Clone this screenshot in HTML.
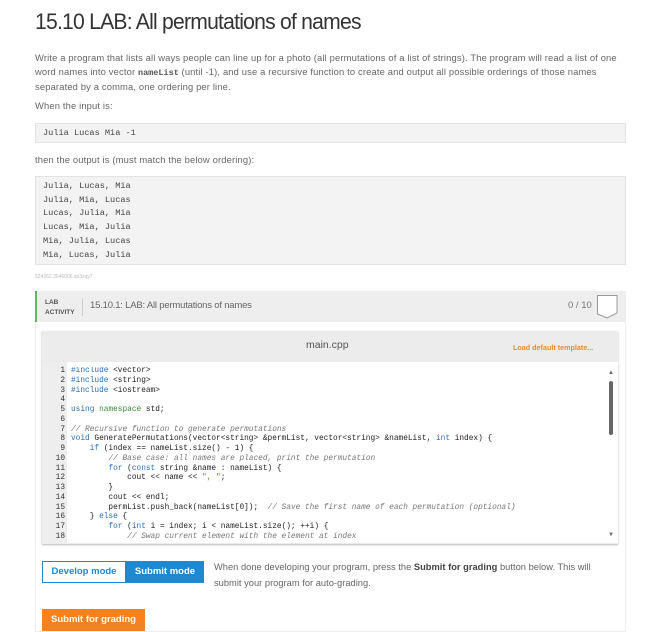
<!DOCTYPE html>
<html><head><style>
body{margin:0;width:661px;height:632px;overflow:hidden;background:#fff;font-family:"Liberation Sans",sans-serif;color:#555;position:relative}
.a{position:absolute}
h1{position:absolute;left:35px;top:9px;margin:0;font-weight:normal;font-size:22px;color:#333;letter-spacing:-0.8px;transform:scaleX(0.96);transform-origin:left}
.p{font-size:9.4px;line-height:14px;color:#666;letter-spacing:0.15px}
.box{background:#f3f3f3;border:1px solid #e3e3e3;font-family:"Liberation Mono",monospace;font-size:8.6px;color:#444;line-height:13.7px;padding:0 7px;box-sizing:border-box}
pre{margin:0;font-family:"Liberation Mono",monospace}
.code{font-size:7.8px;line-height:9.76px;color:#222}
.k{color:#2a6fb0}.g{color:#3a8a3a}.c{color:#777;font-style:italic}.o{color:#b07020}
</style></head><body>
<h1>15.10 LAB: All permutations of names</h1>
<div class="a p" style="left:35px;top:51px;width:592px">Write a program that lists all ways people can line up for a photo (all permutations of a list of strings). The program will read a list of one word names into vector <b style="font-family:'Liberation Mono',monospace;font-size:8.5px;color:#555;letter-spacing:0">nameList</b> (until -1), and use a recursive function to create and output all possible orderings of those names separated by a comma, one ordering per line.</div>
<div class="a p" style="left:35px;top:99px">When the input is:</div>
<div class="a box" style="left:35px;top:123px;width:591px;height:20px;line-height:19px">Julia Lucas Mia -1</div>
<div class="a p" style="left:35px;top:153px">then the output is (must match the below ordering):</div>
<div class="a box" style="left:35px;top:176px;width:591px;height:89px;padding-top:3px"><pre>Julia, Lucas, Mia
Julia, Mia, Lucas
Lucas, Julia, Mia
Lucas, Mia, Julia
Mia, Julia, Lucas
Mia, Lucas, Julia</pre></div>
<div class="a" style="left:35px;top:274px;font-size:5px;color:#bbb">524262.3646606.qx3zqy7</div>

<div class="a" style="left:35px;top:291px;width:591px;height:341px;border:1px solid #eee;border-top:none;box-sizing:border-box"></div>
<div class="a" style="left:35px;top:291px;width:589px;height:31px;background:#eee;border-left:2px solid #5cb85c"></div>
<div class="a" style="left:45px;top:298px;font-size:6.5px;font-weight:bold;color:#555;line-height:10px">LAB<br>ACTIVITY</div>
<div class="a" style="left:82px;top:298px;width:1px;height:18px;background:#ccc"></div>
<div class="a" style="left:90px;top:300px;font-size:9.5px;color:#666;letter-spacing:-0.2px">15.10.1: LAB: All permutations of names</div>
<div class="a" style="left:568px;top:300px;font-size:9.5px;color:#777">0 / 10</div>
<svg class="a" style="left:597px;top:295px" width="21" height="25"><path d="M0.5 0.5H20V18L10 23L0.5 19Z" fill="#fff" stroke="#999"/></svg>

<div class="a" style="left:42px;top:331px;width:576px;height:213px;background:#ececec;box-shadow:0 1px 2px #bbb"></div>
<div class="a" style="left:306px;top:339px;font-size:10.5px;color:#555">main.cpp</div>
<div class="a" style="left:513px;top:343px;font-size:7.2px;font-weight:bold;color:#f08a24">Load default template...</div>
<div class="a" style="left:42px;top:362px;width:576px;height:181px;background:#fff"></div>
<div class="a" style="left:42px;top:362px;width:25px;height:181px;background:#eee"></div>
<pre class="a code" style="left:42px;top:367px;width:23px;text-align:right;color:#333">1
2
3
4
5
6
7
8
9
10
11
12
13
14
15
16
17
18</pre>
<pre class="a code" style="left:71px;top:367px;height:176px;overflow:hidden"><span class="k">#include</span> &lt;vector&gt;
<span class="k">#include</span> &lt;string&gt;
<span class="k">#include</span> &lt;iostream&gt;

<span class="k">using</span> <span class="g">namespace</span> std;

<span class="c">// Recursive function to generate permutations</span>
<span class="k">void</span> GeneratePermutations(vector&lt;string&gt; &amp;permList, vector&lt;string&gt; &amp;nameList, <span class="k">int</span> index) {
    <span class="k">if</span> (index == nameList.size() - 1) {
        <span class="c">// Base case: all names are placed, print the permutation</span>
        <span class="k">for</span> (<span class="k">const</span> string &amp;name : nameList) {
            cout &lt;&lt; name &lt;&lt; <span class="o">", "</span>;
        }
        cout &lt;&lt; endl;
        permList.push_back(nameList[0]);  <span class="c">// Save the first name of each permutation (optional)</span>
    } <span class="k">else</span> {
        <span class="k">for</span> (<span class="k">int</span> i = index; i &lt; nameList.size(); ++i) {
            <span class="c">// Swap current element with the element at index</span>
            swap(nameList[i], nameList[index]);</pre>
<div class="a" style="left:609px;top:381px;width:4px;height:54px;background:#666;border-radius:2px"></div>
<div class="a" style="left:608px;top:370px;font-size:6px;color:#666">▲</div>
<div class="a" style="left:608px;top:532px;font-size:6px;color:#666">▼</div>

<div class="a" style="left:42px;top:561px;width:84px;height:22px;border:1px solid #1e88d0;box-sizing:border-box;font-size:9.5px;font-weight:bold;color:#1e88d0;text-align:center;line-height:20px">Develop mode</div>
<div class="a" style="left:126px;top:561px;width:78px;height:22px;background:#1e88d0;font-size:9.5px;font-weight:bold;color:#fff;text-align:center;line-height:22px">Submit mode</div>
<div class="a p" style="left:214px;top:559px;width:384px;line-height:16px;font-size:9.3px;letter-spacing:0.02px">When done developing your program, press the <b style="color:#444">Submit for grading</b> button below. This will submit your program for auto-grading.</div>
<div class="a" style="left:42px;top:609px;width:103px;height:22px;background:#f5821f;font-size:9.5px;font-weight:bold;color:#fff;text-align:center;line-height:22px">Submit for grading</div>
</body></html>
